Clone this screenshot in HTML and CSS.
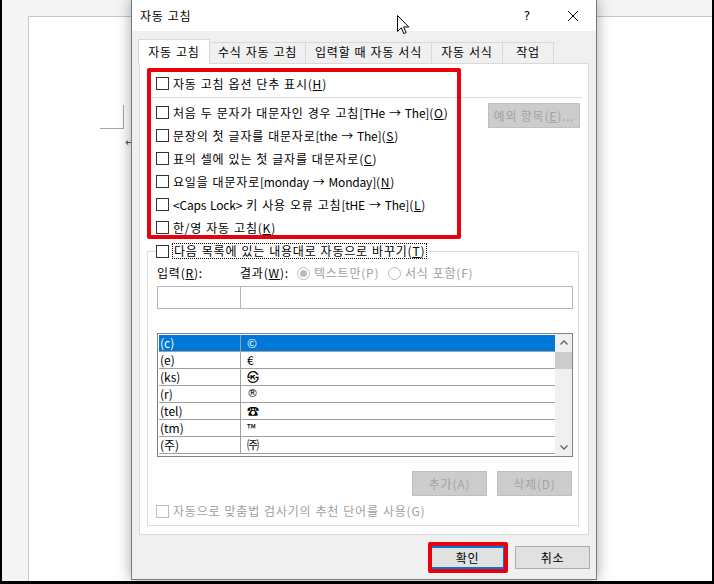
FILE: index.html
```html
<!DOCTYPE html>
<html>
  <head>
    <meta charset="utf-8">
    <title>자동 고침</title>
    <link rel="stylesheet" href="styles.css">
  </head>
  <body>
    <div class="screen">
      <div class="page">
        <div class="margin-mark"></div>
        <div class="para-mark">↵</div>
      </div>

      <div class="dialog">
        <div class="titlebar">
          <span class="title">자동 고침</span>
          <span class="title-btn help">?</span>
          <span class="title-btn">
            <svg width="10" height="10" viewBox="0 0 10 10"><path d="M0 0L10 10M10 0L0 10" stroke="#000" stroke-width="1" fill="none"/></svg>
          </span>
        </div>

        <div class="dlg-body">
          <div class="tabs">
            <div class="tab active" style="width:72px">자동 고침</div>
            <div class="tab" style="width:97px">수식 자동 고침</div>
            <div class="tab" style="width:127px">입력할 때 자동 서식</div>
            <div class="tab" style="width:72px">자동 서식</div>
            <div class="tab" style="width:52px">작업</div>
          </div>

          <div class="pane">
            <div class="row first"><span class="check"></span><span class="lbl">자동 고침 옵션 단추 표시(<u>H</u>)</span></div>
            <div class="sep"></div>
            <div class="opt-block">
              <div class="checks">
                <div class="row"><span class="check"></span><span class="lbl">처음 두 문자가 대문자인 경우 고침<span class="en">[THe → The]</span>(<u>O</u>)</span></div>
                <div class="row"><span class="check"></span><span class="lbl">문장의 첫 글자를 대문자로<span class="en">[the → The]</span>(<u>S</u>)</span></div>
                <div class="row"><span class="check"></span><span class="lbl">표의 셀에 있는 첫 글자를 대문자로(<u>C</u>)</span></div>
                <div class="row"><span class="check"></span><span class="lbl">요일을 대문자로<span class="en">[monday → Monday]</span>(<u>N</u>)</span></div>
                <div class="row"><span class="check"></span><span class="lbl"><span class="en">&lt;Caps Lock&gt;</span> 키 사용 오류 고침<span class="en">[tHE → The]</span>(<u>L</u>)</span></div>
                <div class="row"><span class="check"></span><span class="lbl">한/영 자동 고침(<u>K</u>)</span></div>
              </div>
              <div class="side">
                <button class="btn disabled wide">예외 항목(<u>E</u>)...</button>
              </div>
            </div>

            <fieldset class="group">
              <legend class="legend">
                <span class="check"></span><span class="focus-lbl">다음 목록에 있는 내용대로 자동으로 바꾸기(<u>T</u>)</span>
              </legend>
              <div class="field-labels">
                <span class="col1">입력(<u>R</u>):</span>
                <span>결과(<u>W</u>):</span>
                <span class="radio-item first-radio"><span class="radio on"></span>텍스트만(P)</span>
                <span class="radio-item"><span class="radio"></span>서식 포함(F)</span>
              </div>
              <div class="inputs">
                <div class="input in1"></div>
                <div class="input in2"></div>
              </div>
              <div class="list">
                <div class="rows">
                  <div class="item selected"><span class="c1">(c)</span><span class="c2">©</span></div>
                  <div class="item"><span class="c1">(e)</span><span class="c2">€</span></div>
                  <div class="item"><span class="c1">(ks)</span><span class="c2">㉿</span></div>
                  <div class="item"><span class="c1">(r)</span><span class="c2 sym">®</span></div>
                  <div class="item"><span class="c1">(tel)</span><span class="c2">☎</span></div>
                  <div class="item"><span class="c1">(tm)</span><span class="c2">™</span></div>
                  <div class="item"><span class="c1">(주)</span><span class="c2">㈜</span></div>
                </div>
                <div class="scroll">
                  <div class="arrow">
                    <svg width="8" height="5" viewBox="0 0 8 5"><path d="M0.5 4.5L4 1L7.5 4.5" stroke="#606060" stroke-width="1.3" fill="none"/></svg>
                  </div>
                  <div class="thumb"></div>
                  <div class="track"></div>
                  <div class="arrow">
                    <svg width="8" height="5" viewBox="0 0 8 5"><path d="M0.5 0.5L4 4L7.5 0.5" stroke="#606060" stroke-width="1.3" fill="none"/></svg>
                  </div>
                </div>
              </div>
              <div class="list-btns">
                <button class="btn disabled">추가(A)</button>
                <button class="btn disabled">삭제(D)</button>
              </div>
              <div class="row off"><span class="check dim"></span><span class="lbl">자동으로 맞춤법 검사기의 추천 단어를 사용(G)</span></div>
            </fieldset>

            <div class="highlight hl-options"></div>
          </div>
        </div>

        <div class="footer">
          <span class="ok-wrap">
            <button class="btn default">확인</button>
            <span class="highlight hl-ok"></span>
          </span>
          <button class="btn">취소</button>
        </div>
      </div>

      <svg class="cursor" width="13" height="20" viewBox="0 0 13 20">
        <path d="M0.5 0.5L0.5 16.5L4.3 12.9L6.8 18.6L9.1 17.6L6.7 12L11.8 12Z" fill="#fff" stroke="#000" stroke-width="1" stroke-linejoin="round"/>
      </svg>
    </div>
  </body>
</html>
```

FILE: styles.css
```css
* {
  box-sizing: border-box;
}
body {
  margin: 0;
  background: #000;
  font-family: "Noto Sans CJK KR", "Noto Sans", sans-serif;
  font-size: 12px;
  line-height: 16px;
  color: #000;
}

/* word document behind the dialog */
.screen {
  position: relative;
  width: 710px;
  height: 581px;
  margin-left: 2px;
  padding: 16px 0 0 26px;
  background: #f4f4f4;
  overflow: hidden;
}
.page {
  height: 100%;
  background: #fff;
  border-left: 1px solid #c6c6c6;
  border-top: 1px solid #c6c6c6;
  padding: 88px 0 0 71px;
}
.margin-mark {
  width: 24px;
  height: 24px;
  border-right: 1px solid #a6a6a6;
  border-bottom: 1px solid #a6a6a6;
}
.para-mark {
  margin: 4px 0 0 25px;
  font-size: 11px;
  color: #555;
}

/* dialog window */
.dialog {
  position: absolute;
  left: 129px;
  top: -1px;
  width: 466px;
  height: 581px;
  background: #f0f0f0;
  border: 1px solid #7a7a7a;
  box-shadow: 0 0 14px rgba(0, 0, 0, 0.35);
  display: flex;
  flex-direction: column;
  /* hangul in the system font runs a little wider than Noto */
  letter-spacing: 0.8px;
  word-spacing: 0.6px;
}
.en {
  letter-spacing: -0.2px;
  word-spacing: 1.5px;
}
.titlebar {
  height: 31px;
  background: #fff;
  display: flex;
  align-items: center;
  padding-left: 8px;
}
.title {
  flex: 1;
}
.title-btn {
  width: 46px;
  height: 31px;
  display: flex;
  align-items: center;
  justify-content: center;
}
.help {
  font-family: "DejaVu Sans", sans-serif;
  font-size: 12px;
  letter-spacing: 0;
}

.dlg-body {
  padding: 8px 7px 0 7px;
}
.tabs {
  display: flex;
  align-items: flex-end;
  height: 24px;
}
.tab {
  height: 21px;
  margin-left: -1px;
  border: 1px solid #d9d9d9;
  border-bottom: none;
  background: #f0f0f0;
  text-align: center;
  line-height: 18px;
  white-space: nowrap;
}
.tab.active {
  height: 25px;
  margin-bottom: -1px;
  padding-top: 3px;
  background: #fff;
  position: relative;
  z-index: 1;
}

.pane {
  position: relative;
  height: 472px;
  background: #fff;
  border: 1px solid #d9d9d9;
}
.row {
  display: flex;
  align-items: center;
  height: 23px;
}
.row.first {
  margin-top: 8px;
  padding-left: 16px;
}
.check {
  width: 13px;
  height: 13px;
  border: 1px solid #333;
  background: #fff;
  flex: none;
}
.check.dim {
  border-color: #bcbcbc;
}
.lbl {
  margin-left: 4px;
  white-space: nowrap;
}
.sep {
  height: 1px;
  margin: 2px 6px 3px 12px;
  background: #dcdcdc;
}
.opt-block {
  display: flex;
}
.checks {
  flex: 1;
  padding-left: 16px;
}
.side {
  padding: 2px 8px 0 0;
}

.btn {
  width: 75px;
  height: 23px;
  padding: 0;
  font: inherit;
  letter-spacing: inherit;
  color: #000;
  background: #e1e1e1;
  border: 1px solid #adadad;
  white-space: nowrap;
}
.btn.wide {
  width: 92px;
  height: 25px;
}
.btn.disabled {
  height: 25px;
  background: #cccccc;
  border-color: #bfbfbf;
  color: #a3a3a3;
}
.btn.default {
  border-color: #0078d7;
  box-shadow: inset 0 0 0 1px #0078d7;
}

.group {
  margin: 4px 9px 0 7px;
  padding: 0 5px 4px 9px;
  border: 1px solid #dcdcdc;
  min-width: 0;
}
.legend {
  display: flex;
  align-items: center;
  padding: 0 1px 0 0;
  margin-left: -1px;
}
.focus-lbl {
  margin-left: 3px;
  padding: 0 1px;
  border: 1px dotted #000;
  line-height: 14px;
  white-space: nowrap;
}
.field-labels {
  display: flex;
  align-items: center;
  height: 20px;
  margin-top: 4px;
  white-space: nowrap;
}
.col1 {
  width: 83px;
}
.radio-item {
  display: flex;
  align-items: center;
  color: #a0a0a0;
}
.first-radio {
  width: 91px;
  margin-left: 8px;
}
.radio {
  width: 13px;
  height: 13px;
  margin-right: 4px;
  border: 1px solid #bcbcbc;
  border-radius: 50%;
  background: #fff;
  display: flex;
  align-items: center;
  justify-content: center;
}
.radio.on::after {
  content: "";
  width: 7px;
  height: 7px;
  border-radius: 50%;
  background: #bcbcbc;
}
.inputs {
  display: flex;
  margin-top: 3px;
}
.input {
  height: 23px;
  background: #fff;
  border: 1px solid #b5b5b5;
}
.in1 {
  width: 84px;
}
.in2 {
  flex: 1;
  margin-left: -1px;
}

.list {
  display: flex;
  height: 124px;
  margin-top: 24px;
  border: 1px solid #828282;
  background: #fff;
  letter-spacing: 0;
}
.rows {
  flex: 1;
  padding: 1px 0 0 1px;
  overflow: hidden;
}
.item {
  display: flex;
  height: 17px;
  border-bottom: 1px solid #a0a0a0;
  line-height: 16px;
}
.item.selected {
  background: #0078d7;
  color: #fff;
}
.c1 {
  width: 82px;
  padding-left: 1px;
  border-right: 1px solid #a0a0a0;
}
.c2 {
  padding-left: 6px;
}
.sym {
  font-family: "DejaVu Sans", sans-serif;
  font-size: 11px;
}
.scroll {
  width: 17px;
  background: #f0f0f0;
  display: flex;
  flex-direction: column;
}
.arrow {
  height: 17px;
  display: flex;
  align-items: center;
  justify-content: center;
}
.thumb {
  height: 17px;
  margin-top: 1px;
  background: #cdcdcd;
}
.track {
  flex: 1;
}
.list-btns {
  display: flex;
  justify-content: flex-end;
  gap: 10px;
  margin-top: 14px;
  padding-right: 1px;
}
.row.off {
  height: 20px;
  margin: 5px 0 0 -1px;
  color: #a0a0a0;
}

.footer {
  display: flex;
  justify-content: flex-end;
  gap: 10px;
  padding: 11px 6px 0 0;
}
.ok-wrap {
  position: relative;
  display: flex;
}

/* red annotation boxes drawn over the dialog */
.highlight {
  position: absolute;
  border: 4px solid #e8000b;
  border-radius: 2px;
}
.hl-options {
  left: 7px;
  top: 4px;
  width: 314px;
  height: 171px;
}
.hl-ok {
  left: -2px;
  top: -4px;
  width: 80px;
  height: 31px;
}

.cursor {
  position: absolute;
  left: 395px;
  top: 15px;
}
```
